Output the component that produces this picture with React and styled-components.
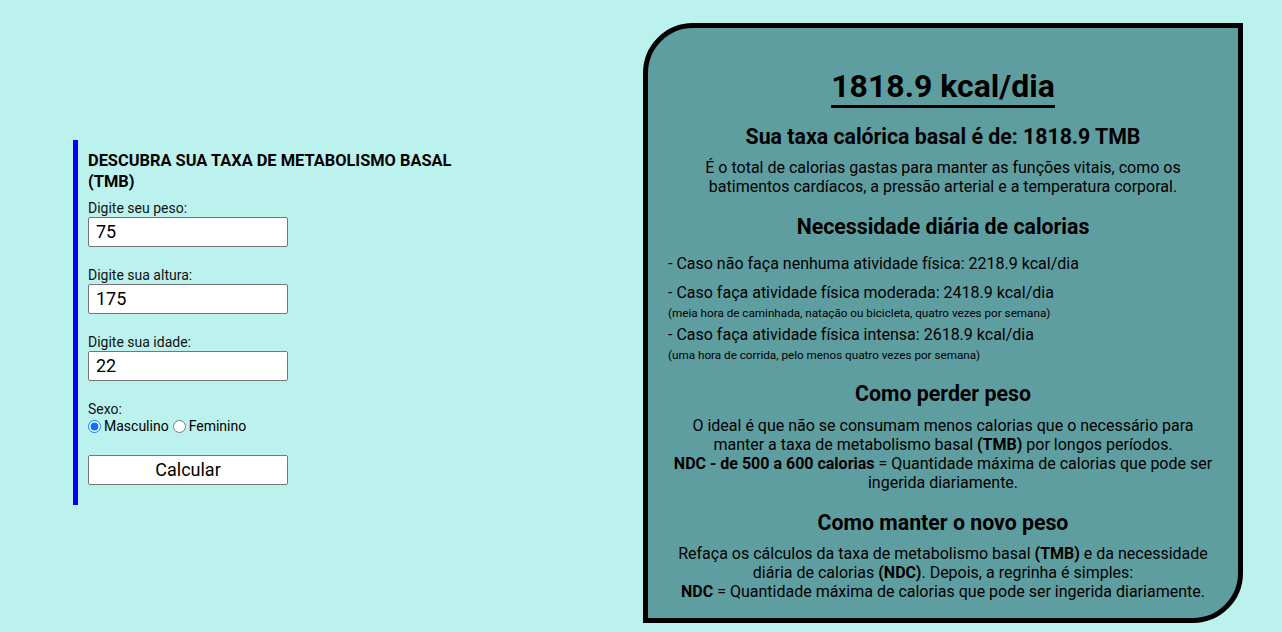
import React from "react";
import styled, { createGlobalStyle } from "styled-components";

const GlobalStyle = createGlobalStyle`
  html, body {
    margin: 0;
    padding: 0;
    background: #bcf2ee;
    font-family: Roboto, "Liberation Sans", sans-serif;
    color: #000;
  }
`;

const Page = styled.div`
  display: flex;
  align-items: center;
  justify-content: space-between;
  padding: 23px 39px 10px 73px;
`;

const FormPanel = styled.form`
  width: 380px;
  border-left: 5px solid #0000ff;
  padding: 10px 10px 20px 10px;
  margin-bottom: 2px;
`;

const FormTitle = styled.h3`
  margin: 0 0 8px;
  font-size: 16.4px;
  line-height: 21px;
  font-weight: 700;
  text-transform: uppercase;
`;

const Field = styled.div`
  margin-bottom: 20px;
`;

const Label = styled.label`
  display: block;
  font-size: 14px;
  line-height: 17px;
  color: #111;
`;

const Input = styled.input`
  box-sizing: border-box;
  width: 200px;
  height: 30px;
  border: 1px solid #767676;
  border-radius: 2px;
  padding: 0 7px;
  font-family: Roboto, "Liberation Sans", sans-serif;
  font-size: 18px;
  color: #000;
  background: #fff;
`;

const RadioRow = styled.div`
  display: flex;
  align-items: center;
  font-size: 14px;
  line-height: 17px;
  margin-bottom: 20px;
`;

const Radio = styled.input`
  margin: 0 3px 0 ${(p) => (p.$spaced ? 4 : 0)}px;
  width: 13px;
  height: 13px;
`;

const Button = styled.button`
  box-sizing: border-box;
  width: 200px;
  height: 30px;
  border: 1px solid #767676;
  border-radius: 2px;
  background: #fff;
  font-family: Roboto, "Liberation Sans", sans-serif;
  font-size: 18px;
  color: #000;
  cursor: pointer;
`;

const Card = styled.section`
  box-sizing: border-box;
  width: 600px;
  height: 600px;
  background: #5f9ea0;
  border: 5px solid #000;
  border-radius: 50px 0 50px 0;
  padding: 40px 20px 17px;
  text-align: center;
`;

const Result = styled.h1`
  display: inline-block;
  margin: 0;
  font-size: 32px;
  line-height: 37px;
  font-weight: 700;
  border-bottom: 3px solid #000;
`;

const Heading = styled.h2`
  margin: ${(p) => p.$top || 17}px 0 ${(p) => (p.$bottom ?? 9)}px;
  font-size: 21.3px;
  line-height: 25px;
  font-weight: 700;
`;

const Text = styled.p`
  margin: 0;
  font-size: 16px;
  line-height: 19px;
`;

const List = styled.div`
  text-align: left;
  margin-top: 15px;
`;

const Item = styled.div`
  font-size: 16px;
  line-height: 19px;
  margin-top: ${(p) => p.$gap || 0}px;
`;

const Note = styled.div`
  font-size: 11.7px;
  line-height: 15px;
  margin-top: 4px;
`;

export default function App() {
  return (
    <>
      <GlobalStyle />
      <Page>
        <FormPanel onSubmit={(e) => e.preventDefault()}>
          <FormTitle>Descubra sua taxa de metabolismo basal (TMB)</FormTitle>
          <Field>
            <Label htmlFor="peso">Digite seu peso:</Label>
            <Input id="peso" defaultValue="75" />
          </Field>
          <Field>
            <Label htmlFor="altura">Digite sua altura:</Label>
            <Input id="altura" defaultValue="175" />
          </Field>
          <Field>
            <Label htmlFor="idade">Digite sua idade:</Label>
            <Input id="idade" defaultValue="22" />
          </Field>
          <Label>Sexo:</Label>
          <RadioRow>
            <Radio type="radio" name="sexo" id="m" defaultChecked />
            <label htmlFor="m">Masculino</label>
            <Radio type="radio" name="sexo" id="f" $spaced />
            <label htmlFor="f">Feminino</label>
          </RadioRow>
          <Button type="submit">Calcular</Button>
        </FormPanel>

        <Card>
          <Result>1818.9 kcal/dia</Result>
          <Heading $top={16}>Sua taxa calórica basal é de: 1818.9 TMB</Heading>
          <Text>
            É o total de calorias gastas para manter as funções vitais, como os
            batimentos cardíacos, a pressão arterial e a temperatura corporal.
          </Text>
          <Heading $top={18} $bottom={0}>
            Necessidade diária de calorias
          </Heading>
          <List>
            <Item>- Caso não faça nenhuma atividade física: 2218.9 kcal/dia</Item>
            <Item $gap={10}>- Caso faça atividade física moderada: 2418.9 kcal/dia</Item>
            <Note>(meia hora de caminhada, natação ou bicicleta, quatro vezes por semana)</Note>
            <Item $gap={4}>- Caso faça atividade física intensa: 2618.9 kcal/dia</Item>
            <Note>(uma hora de corrida, pelo menos quatro vezes por semana)</Note>
          </List>
          <Heading $top={18} $bottom={10}>Como perder peso</Heading>
          <Text>
            O ideal é que não se consumam menos calorias que o necessário para
            manter a taxa de metabolismo basal <b>(TMB)</b> por longos períodos.
            <br />
            <b>NDC - de 500 a 600 calorias</b> = Quantidade máxima de calorias que
            pode ser ingerida diariamente.
          </Text>
          <Heading $top={18}>Como manter o novo peso</Heading>
          <Text>
            Refaça os cálculos da taxa de metabolismo basal <b>(TMB)</b> e da
            necessidade diária de calorias <b>(NDC)</b>. Depois, a regrinha é
            simples:
            <br />
            <b>NDC</b> = Quantidade máxima de calorias que pode ser ingerida
            diariamente.
          </Text>
        </Card>
      </Page>
    </>
  );
}
